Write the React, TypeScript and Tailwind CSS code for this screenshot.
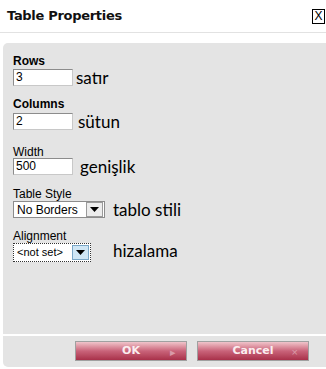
import React from 'react';

const label = "text-[12px] leading-[12px] text-black";
const bold = "text-[12px] leading-[13px] font-bold text-black";
const note = "font-['Lato',sans-serif] text-[17px] leading-none text-black";

function TextBox({ value }: { value: string }) {
  return (
    <div className="w-[60px] h-[17px] bg-white border border-[#8c8c8c] border-r-[#c8c8c8] border-b-[#c8c8c8] pl-[2px] text-[12px] leading-[15px]">
      {value}
    </div>
  );
}

function Arrow({ light }: { light?: boolean }) {
  return (
    <div className={`w-[17px] h-[15px] flex items-center justify-center border ${light ? 'bg-[#cfe6f5] border-[#7aa7c8]' : 'bg-[#ececec] border-[#9a9a9a]'}`}>
      <svg width="9" height="5" viewBox="0 0 9 5"><path d="M0 0h9L4.5 5z" fill="#000" /></svg>
    </div>
  );
}

export default function App() {
  return (
    <div className="w-[326px] h-[369px] bg-white font-['Liberation_Sans',Arial,sans-serif] flex flex-col overflow-hidden">
      <div className="h-[33px] flex items-center justify-between pl-[7px] pr-[1px] border-b border-[#e2e2e2]">
        <span className="font-['DejaVu_Sans',sans-serif] font-bold text-[13px] tracking-[-0.3px] text-[#111]">Table Properties</span>
        <span className="w-[13px] h-[15px] border border-black flex items-center justify-center text-[12px] leading-none">X</span>
      </div>
      <div className="h-[10px]" />
      <div className="ml-[3px] flex-1 mb-[2px] bg-[#e4e4e4] rounded-l-[5px] flex flex-col">
        <div className="flex-1 pl-[10px] pt-[12px]">
          <div className={bold}>Rows</div>
          <div className="flex items-center gap-[3px] mt-[1px] h-[17px]">
            <TextBox value="3" />
            <span className={note}>satır</span>
          </div>
          <div className={`${bold} mt-[12px]`}>Columns</div>
          <div className="flex items-center gap-[5px] mt-[2px] h-[17px]">
            <TextBox value="2" />
            <span className={note}>sütun</span>
          </div>
          <div className={`${label} mt-[16px]`}>Width</div>
          <div className="flex items-center gap-[7px] h-[17px]">
            <TextBox value="500" />
            <span className={note}>genişlik</span>
          </div>
          <div className={`${label} mt-[13px]`}>Table Style</div>
          <div className="flex items-center gap-[8px] mt-[1px] h-[17px]">
            <div className="w-[92px] h-[17px] bg-white border border-[#8c8c8c] flex items-center justify-between pl-[3px] pr-[1px] text-[12px]">
              <span>No Borders</span>
              <Arrow />
            </div>
            <span className={note}>tablo stili</span>
          </div>
          <div className={`${label} mt-[12px]`}>Alignment</div>
          <div className="flex items-center gap-[22px] mt-[1px] h-[19px]">
            <div className="w-[78px] h-[19px] bg-white border border-dotted border-[#333] flex items-center justify-between pl-[3px] pr-[1px] text-[11px]">
              <span>&lt;not set&gt;</span>
              <Arrow light />
            </div>
            <span className={`${note} -mt-[5px]`}>hizalama</span>
          </div>
        </div>
        <div className="border-t-2 border-white h-[33px] flex items-start justify-end gap-[10px] pr-[17px] pt-[5px]">
          {[['OK', '▸'], ['Cancel', '×']].map(([t, s]) => (
            <div key={t} className="relative w-[112px] h-[20px] border border-[#a0a0a0] bg-gradient-to-b from-[#efc4cb] via-[#c9637a] to-[#a8304a] flex items-center justify-center">
              <span className="font-['DejaVu_Sans',sans-serif] font-bold text-[11px] text-[#fbeef0]">{t}</span>
              <span className="absolute right-[10px] top-[2px] text-[11px] text-[#d99aa8]">{s}</span>
            </div>
          ))}
        </div>
      </div>
    </div>
  );
}
